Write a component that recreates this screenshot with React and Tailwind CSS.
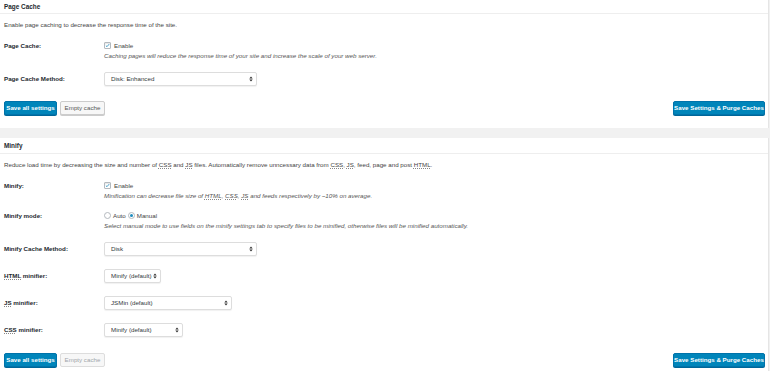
import React from "react";

const Abbr = ({ children }) => (
  <span className="underline decoration-dotted decoration-[#888] underline-offset-[1px]">{children}</span>
);

const Check = ({ label }) => (
  <div className="flex items-center h-[9px] gap-[3px]">
    <span className="w-[7px] h-[7px] border border-[#b4b9be] bg-white rounded-[1px] flex items-center justify-center shadow-[inset_0_1px_1px_rgba(0,0,0,0.1)]">
      <svg width="7" height="7" viewBox="0 0 10 10">
        <path d="M1.8 5.2 L4 7.4 L8.4 2.2" fill="none" stroke="#1e8cbe" strokeWidth="1.6" />
      </svg>
    </span>
    <span className="text-[#444]">{label}</span>
  </div>
);

const Radio = ({ checked, label }) => (
  <span className="flex items-center gap-[2px]">
    <span className="w-[7px] h-[7px] border border-[#b4b9be] bg-white rounded-full flex items-center justify-center">
      {checked && <span className="w-[3px] h-[3px] rounded-full bg-[#1e8cbe]" />}
    </span>
    <span className="text-[#444]">{label}</span>
  </span>
);

const Select = ({ w, value }) => (
  <div
    className={`h-[14px] ${w} bg-white border border-[#ddd] rounded-[2px] shadow-[0_1px_1px_rgba(0,0,0,0.06)] flex items-center justify-between pl-[6px] pr-[3px] text-[#32373c]`}
  >
    <span>{value}</span>
    <svg width="4" height="6" viewBox="0 0 4 6">
      <path d="M0.3 2.4 L2 0.4 L3.7 2.4Z M0.3 3.6 L2 5.6 L3.7 3.6Z" fill="#333" />
    </svg>
  </div>
);

const Label = ({ children }) => (
  <div className="w-[100px] shrink-0 font-semibold text-[#23282d]">{children}</div>
);

const Buttons = ({ emptyDisabled }) => (
  <div className="flex items-center justify-between h-[14px]">
    <div className="flex gap-[3px]">
      <button className="h-[14px] w-[53px] bg-[#0085ba] border border-[#0073aa] rounded-[2px] text-white font-semibold shadow-[0_1px_0_#006799] leading-none whitespace-nowrap">
        Save all settings
      </button>
      <button
        className={`h-[14px] w-[45px] border rounded-[2px] leading-none whitespace-nowrap ${
          emptyDisabled
            ? "bg-[#f7f7f7] border-[#ddd] text-[#a0a5aa]"
            : "bg-[#f7f7f7] border-[#ccc] text-[#555] shadow-[0_1px_0_#ccc]"
        }`}
      >
        Empty cache
      </button>
    </div>
    <button className="h-[14px] w-[92px] mr-[-1px] bg-[#0085ba] border border-[#0073aa] rounded-[2px] text-white font-semibold shadow-[0_1px_0_#006799] leading-none whitespace-nowrap">
      Save Settings &amp; Purge Caches
    </button>
  </div>
);

export default function App() {
  return (
    <div
      className="w-[770px] h-[371px] overflow-hidden bg-[#f1f1f1] text-[6.2px] leading-[10px] text-[#444]"
      style={{ fontFamily: '"Liberation Sans", Arial, sans-serif' }}
    >
      {/* Page Cache panel */}
      <div className="w-[769px] bg-white border-r border-[#e5e5e5]">
        <div className="h-[14px] border-b border-[#eee] px-[4px] flex items-center font-bold text-[#23282d] text-[6.4px]">
          Page Cache
        </div>
        <div className="px-[4px] pb-[13px]">
          <div className="mt-[6px]">Enable page caching to decrease the response time of the site.</div>
          <div className="mt-[11px] flex">
            <Label><div className="h-[9px] flex items-center">Page Cache:</div></Label>
            <div>
              <Check label="Enable" />
              <div className="italic text-[#555] h-[9px] leading-[9px] mt-[1px]">
                Caching pages will reduce the response time of your site and increase the scale of your web server.
              </div>
            </div>
          </div>
          <div className="mt-[12px] flex items-center">
            <Label>Page Cache Method:</Label>
            <Select w="w-[153px]" value="Disk: Enhanced" />
          </div>
          <div className="mt-[15px]">
            <Buttons />
          </div>
        </div>
      </div>

      <div className="h-[10px]" />

      {/* Minify panel */}
      <div className="w-[769px] bg-white border-r border-[#e5e5e5] h-[233px]">
        <div className="h-[16px] border-b border-[#eee] px-[4px] flex items-center font-bold text-[#23282d] text-[6.4px]">
          Minify
        </div>
        <div className="px-[4px]">
          <div className="mt-[6px]">
            Reduce load time by decreasing the size and number of <Abbr>CSS</Abbr> and <Abbr>JS</Abbr> files.
            Automatically remove unncessary data from <Abbr>CSS</Abbr>, <Abbr>JS</Abbr>, feed, page and post{" "}
            <Abbr>HTML</Abbr>.
          </div>
          <div className="mt-[11px] flex">
            <Label><div className="h-[9px] flex items-center">Minify:</div></Label>
            <div>
              <Check label="Enable" />
              <div className="italic text-[#555] h-[9px] leading-[9px] mt-[1px]">
                Minification can decrease file size of <Abbr>HTML</Abbr>, <Abbr>CSS</Abbr>, <Abbr>JS</Abbr> and feeds
                respectively by ~10% on average.
              </div>
            </div>
          </div>
          <div className="mt-[11px] flex">
            <Label><div className="h-[10px] flex items-center">Minify mode:</div></Label>
            <div>
              <div className="flex items-center h-[9px] gap-[2px]">
                <Radio label="Auto" />
                <Radio checked label="Manual" />
              </div>
              <div className="italic text-[#555] h-[9px] leading-[9px] mt-[1px]">
                Select manual mode to use fields on the minify settings tab to specify files to be minified, otherwise
                files will be minified automatically.
              </div>
            </div>
          </div>
          <div className="mt-[12px] flex items-center">
            <Label>Minify Cache Method:</Label>
            <Select w="w-[153px]" value="Disk" />
          </div>
          <div className="mt-[13px] flex items-center">
            <Label><Abbr>HTML</Abbr> minifier:</Label>
            <Select w="w-[57px]" value="Minify (default)" />
          </div>
          <div className="mt-[13px] flex items-center">
            <Label><Abbr>JS</Abbr> minifier:</Label>
            <Select w="w-[128px]" value="JSMin (default)" />
          </div>
          <div className="mt-[13px] flex items-center">
            <Label><Abbr>CSS</Abbr> minifier:</Label>
            <Select w="w-[79px]" value="Minify (default)" />
          </div>
          <div className="mt-[16px]">
            <Buttons emptyDisabled />
          </div>
        </div>
      </div>
    </div>
  );
}
